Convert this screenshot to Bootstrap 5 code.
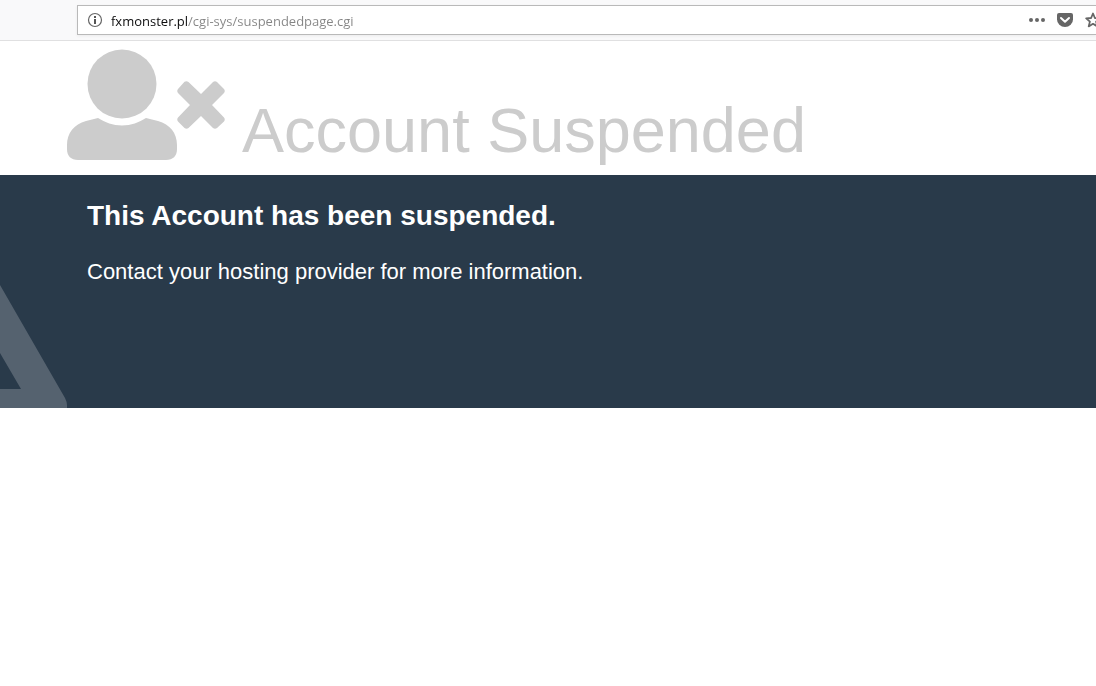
<!DOCTYPE html>
<html lang="en">
<head>
<meta charset="utf-8">
<meta name="viewport" content="width=device-width, initial-scale=1">
<title>Account Suspended</title>
<link href="https://cdn.jsdelivr.net/npm/bootstrap@5.3.0/dist/css/bootstrap.min.css" rel="stylesheet">
<style>
  body { font-family: "Liberation Sans", Arial, sans-serif; background: #fff; }
  .toolbar { background: #f9f9fa; border-bottom: 1px solid #e0e0e1; padding: 5px 0 5px 77px; }
  .address { height: 30px; border: 1px solid #b9b9b9; border-right: 0; background: #fff; padding-left: 9px; box-shadow: 0 1px 3px rgba(0,0,0,.06); }
  .address button { line-height: 0; }
  .address .url {
    font: 13px/20px "Open Sans", "Noto Sans", sans-serif;
    outline: 0; height: 28px; min-width: 0; padding: 2px 0 0;
    color: transparent;
    background: linear-gradient(90deg, #0c0c0d 76px, #858585 76px) text;
    -webkit-background-clip: text;
  }
  .actions { gap: 12px; }
  .star { width: 11px; overflow: hidden; }
  .status-head { height: 134px; padding: 8px 0 0 67px; color: #ccc; gap: 17px; }
  .status-head h1 { font-size: 63px; line-height: 72px; padding-top: 45px; }
  .info { background: #293a4a; color: #fff; min-height: 233px; padding: 24px 16px 24px 87px; }
  .info h2 { font-size: 28px; line-height: 34px; margin-bottom: 26px; }
  .info p { font-size: 22px; line-height: 26px; }
  .letter-art { left: 0; bottom: 0; }
</style>
<script src="https://cdn.jsdelivr.net/npm/bootstrap@5.3.0/dist/js/bootstrap.bundle.min.js"></script>
</head>
<body>
<header class="toolbar">
  <div class="address d-flex align-items-center">
    <button type="button" class="border-0 bg-transparent p-0" aria-label="Site information">
      <svg width="16" height="16" viewBox="0 0 16 16"><circle cx="8" cy="8" r="6.5" fill="none" stroke="#666" stroke-width="1.2"/><rect x="7" y="4" width="2" height="2" fill="#555"/><rect x="7" y="7" width="2" height="5" fill="#555"/></svg>
    </button>
    <input class="url border-0 flex-grow-1 ms-2" type="text" aria-label="Address" value="fxmonster.pl/cgi-sys/suspendedpage.cgi" spellcheck="false">
    <div class="actions d-flex align-items-center">
      <button type="button" class="border-0 bg-transparent p-0" aria-label="Page actions">
        <svg width="16" height="16" viewBox="0 0 16 16" fill="#666"><circle cx="2" cy="8" r="2"/><circle cx="8" cy="8" r="2"/><circle cx="14" cy="8" r="2"/></svg>
      </button>
      <button type="button" class="border-0 bg-transparent p-0" aria-label="Save to Pocket">
        <svg width="16" height="16" viewBox="0 0 16 16"><path d="M2 1h12a2 2 0 0 1 2 2v4.500a8 7.500 0 0 1-16 0V3a2 2 0 0 1 2-2z" fill="#666"/><path d="M4 6l4 3.800L12 6" fill="none" stroke="#fff" stroke-width="2" stroke-linecap="round" stroke-linejoin="round"/></svg>
      </button>
      <button type="button" class="star border-0 bg-transparent p-0 text-start" aria-label="Bookmark this page">
        <svg width="16" height="16" viewBox="0 0 16 16"><path d="M8 1.500l1.900 4.500 4.900.400-3.700 3.200 1.200 4.800L8 11.800l-4.300 2.600 1.200-4.800L1.200 6.400 6.100 6z" fill="none" stroke="#666" stroke-width="1.800" stroke-linejoin="round"/></svg>
      </button>
    </div>
  </div>
</header>
<main>
  <div class="status-head d-flex align-items-start">
    <svg class="flex-shrink-0" width="158" height="112" viewBox="0 0 158 112" fill="#ccc" aria-hidden="true">
      <circle cx="55" cy="35" r="34.500"/>
      <path d="M31 69C38 73.500 46 76.500 55 76.500S72 73.500 79 69L91 72C103 75.500 110 84 110 96V100C110 107 106 111 99 111H11C4 111 0 107 0 100V96C0 84 7 75.500 19 72Z"/>
      <path d="M117.500 32.800Q119.500 31.500 121.500 33L134 45 146 33Q148 31.500 150 33L157 40Q158.500 42 157 44L145 56 157 68.500Q158.500 70.500 157 72.500L150 79Q148 80.500 146 79L134 67 121.500 79Q119.500 80.500 117.500 79L111 72.500Q109.500 70.500 111 68.500L123 56 111 44Q109.500 42 111 40Z"/>
    </svg>
    <h1 class="m-0 fw-normal">Account Suspended</h1>
  </div>
  <section class="info position-relative overflow-hidden">
    <svg class="letter-art position-absolute" width="67" height="124" viewBox="0 0 67 124" fill="#55626f" aria-hidden="true"><path d="M0 1L65 114Q67 118 67 121V124H0V105H21L0 69Z"/></svg>
    <h2 class="fw-bold mt-0">This Account has been suspended.</h2>
    <p class="m-0">Contact your hosting provider for more information.</p>
  </section>
</main>
</body>
</html>
